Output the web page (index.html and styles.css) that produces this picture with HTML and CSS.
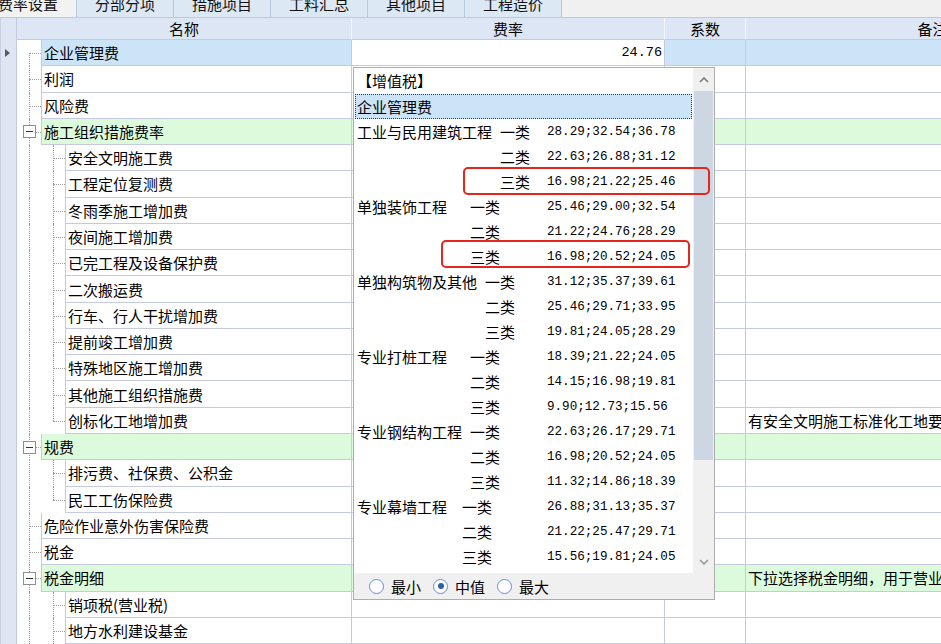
FILE: index.html
```html
<!DOCTYPE html>
<html lang="zh-CN">
<head>
<meta charset="utf-8">
<title>费率设置</title>
<link rel="stylesheet" href="styles.css">
</head>
<body>
<div class="tabs">
  <div class="tab active">费率设置</div>
  <div class="tab">分部分项</div>
  <div class="tab">措施项目</div>
  <div class="tab">工料汇总</div>
  <div class="tab">其他项目</div>
  <div class="tab">工程造价</div>
</div>

<div class="grid">
  <div class="hrow">
    <div class="gut"></div>
    <div class="hc c-name">名称</div>
    <div class="hc c-rate">费率</div>
    <div class="hc c-coef">系数</div>
    <div class="hc c-rem">备注</div>
  </div>

  <div class="row sel">
    <div class="gut"><span class="arrow"></span></div>
    <div class="c-name tree"><span class="ind vl h"></span><span class="nm">企业管理费</span></div>
    <div class="cell c-rate edit">24.76</div>
    <div class="cell c-coef"></div>
    <div class="cell c-rem"></div>
  </div>
  <div class="row">
    <div class="gut"></div>
    <div class="c-name tree"><span class="ind v h"></span><span class="nm">利润</span></div>
    <div class="cell c-rate"></div><div class="cell c-coef"></div><div class="cell c-rem"></div>
  </div>
  <div class="row">
    <div class="gut"></div>
    <div class="c-name tree"><span class="ind v h"></span><span class="nm">风险费</span></div>
    <div class="cell c-rate"></div><div class="cell c-coef"></div><div class="cell c-rem"></div>
  </div>
  <div class="row g">
    <div class="gut"></div>
    <div class="c-name tree"><span class="ind v h"><span class="box"></span></span><span class="nm">施工组织措施费率</span></div>
    <div class="cell c-rate"></div><div class="cell c-coef"></div><div class="cell c-rem"></div>
  </div>
  <div class="row">
    <div class="gut"></div>
    <div class="c-name tree"><span class="ind v"></span><span class="ind v h"></span><span class="nm">安全文明施工费</span></div>
    <div class="cell c-rate"></div><div class="cell c-coef"></div><div class="cell c-rem"></div>
  </div>
  <div class="row">
    <div class="gut"></div>
    <div class="c-name tree"><span class="ind v"></span><span class="ind v h"></span><span class="nm">工程定位复测费</span></div>
    <div class="cell c-rate"></div><div class="cell c-coef"></div><div class="cell c-rem"></div>
  </div>
  <div class="row">
    <div class="gut"></div>
    <div class="c-name tree"><span class="ind v"></span><span class="ind v h"></span><span class="nm">冬雨季施工增加费</span></div>
    <div class="cell c-rate"></div><div class="cell c-coef"></div><div class="cell c-rem"></div>
  </div>
  <div class="row">
    <div class="gut"></div>
    <div class="c-name tree"><span class="ind v"></span><span class="ind v h"></span><span class="nm">夜间施工增加费</span></div>
    <div class="cell c-rate"></div><div class="cell c-coef"></div><div class="cell c-rem"></div>
  </div>
  <div class="row">
    <div class="gut"></div>
    <div class="c-name tree"><span class="ind v"></span><span class="ind v h"></span><span class="nm">已完工程及设备保护费</span></div>
    <div class="cell c-rate"></div><div class="cell c-coef"></div><div class="cell c-rem"></div>
  </div>
  <div class="row">
    <div class="gut"></div>
    <div class="c-name tree"><span class="ind v"></span><span class="ind v h"></span><span class="nm">二次搬运费</span></div>
    <div class="cell c-rate"></div><div class="cell c-coef"></div><div class="cell c-rem"></div>
  </div>
  <div class="row">
    <div class="gut"></div>
    <div class="c-name tree"><span class="ind v"></span><span class="ind v h"></span><span class="nm">行车、行人干扰增加费</span></div>
    <div class="cell c-rate"></div><div class="cell c-coef"></div><div class="cell c-rem"></div>
  </div>
  <div class="row">
    <div class="gut"></div>
    <div class="c-name tree"><span class="ind v"></span><span class="ind v h"></span><span class="nm">提前竣工增加费</span></div>
    <div class="cell c-rate"></div><div class="cell c-coef"></div><div class="cell c-rem"></div>
  </div>
  <div class="row">
    <div class="gut"></div>
    <div class="c-name tree"><span class="ind v"></span><span class="ind v h"></span><span class="nm">特殊地区施工增加费</span></div>
    <div class="cell c-rate"></div><div class="cell c-coef"></div><div class="cell c-rem"></div>
  </div>
  <div class="row">
    <div class="gut"></div>
    <div class="c-name tree"><span class="ind v"></span><span class="ind v h"></span><span class="nm">其他施工组织措施费</span></div>
    <div class="cell c-rate"></div><div class="cell c-coef"></div><div class="cell c-rem"></div>
  </div>
  <div class="row">
    <div class="gut"></div>
    <div class="c-name tree"><span class="ind v"></span><span class="ind vu h"></span><span class="nm">创标化工地增加费</span></div>
    <div class="cell c-rate"></div><div class="cell c-coef"></div><div class="cell c-rem">有安全文明施工标准化工地要求的工程计取</div>
  </div>
  <div class="row g">
    <div class="gut"></div>
    <div class="c-name tree"><span class="ind v h"><span class="box"></span></span><span class="nm">规费</span></div>
    <div class="cell c-rate"></div><div class="cell c-coef"></div><div class="cell c-rem"></div>
  </div>
  <div class="row">
    <div class="gut"></div>
    <div class="c-name tree"><span class="ind v"></span><span class="ind v h"></span><span class="nm">排污费、社保费、公积金</span></div>
    <div class="cell c-rate"></div><div class="cell c-coef"></div><div class="cell c-rem"></div>
  </div>
  <div class="row">
    <div class="gut"></div>
    <div class="c-name tree"><span class="ind v"></span><span class="ind vu h"></span><span class="nm">民工工伤保险费</span></div>
    <div class="cell c-rate"></div><div class="cell c-coef"></div><div class="cell c-rem"></div>
  </div>
  <div class="row">
    <div class="gut"></div>
    <div class="c-name tree"><span class="ind v h"></span><span class="nm">危险作业意外伤害保险费</span></div>
    <div class="cell c-rate"></div><div class="cell c-coef"></div><div class="cell c-rem"></div>
  </div>
  <div class="row">
    <div class="gut"></div>
    <div class="c-name tree"><span class="ind v h"></span><span class="nm">税金</span></div>
    <div class="cell c-rate"></div><div class="cell c-coef"></div><div class="cell c-rem"></div>
  </div>
  <div class="row g">
    <div class="gut"></div>
    <div class="c-name tree"><span class="ind v h"><span class="box"></span></span><span class="nm">税金明细</span></div>
    <div class="cell c-rate"></div><div class="cell c-coef"></div><div class="cell c-rem">下拉选择税金明细，用于营业税计算</div>
  </div>
  <div class="row">
    <div class="gut"></div>
    <div class="c-name tree"><span class="ind v"></span><span class="ind v h"></span><span class="nm">销项税(营业税)</span></div>
    <div class="cell c-rate"></div><div class="cell c-coef"></div><div class="cell c-rem"></div>
  </div>
  <div class="row">
    <div class="gut"></div>
    <div class="c-name tree"><span class="ind v"></span><span class="ind v h"></span><span class="nm">地方水利建设基金</span></div>
    <div class="cell c-rate"></div><div class="cell c-coef"></div><div class="cell c-rem"></div>
  </div>
</div>

<div class="popup">
  <div class="pbody">
    <div class="list">
      <div class="phead">【增值税】</div>
      <div class="psel">企业管理费</div>
      <div class="opt"><span class="lead"><span class="pn w143">工业与民用建筑工程</span><span>一类</span></span><span class="num">28.29;32.54;36.78</span></div>
      <div class="opt"><span class="lead"><span class="pn w143"></span><span>二类</span></span><span class="num">22.63;26.88;31.12</span></div>
      <div class="opt"><span class="lead"><span class="pn w143"></span><span>三类</span></span><span class="num">16.98;21.22;25.46</span></div>
      <div class="opt"><span class="lead"><span class="pn w112">单独装饰工程</span><span>一类</span></span><span class="num">25.46;29.00;32.54</span></div>
      <div class="opt"><span class="lead"><span class="pn w112"></span><span>二类</span></span><span class="num">21.22;24.76;28.29</span></div>
      <div class="opt"><span class="lead"><span class="pn w112"></span><span>三类</span></span><span class="num">16.98;20.52;24.05</span></div>
      <div class="opt"><span class="lead"><span class="pn w128">单独构筑物及其他</span><span>一类</span></span><span class="num">31.12;35.37;39.61</span></div>
      <div class="opt"><span class="lead"><span class="pn w128"></span><span>二类</span></span><span class="num">25.46;29.71;33.95</span></div>
      <div class="opt"><span class="lead"><span class="pn w128"></span><span>三类</span></span><span class="num">19.81;24.05;28.29</span></div>
      <div class="opt"><span class="lead"><span class="pn w112">专业打桩工程</span><span>一类</span></span><span class="num">18.39;21.22;24.05</span></div>
      <div class="opt"><span class="lead"><span class="pn w112"></span><span>二类</span></span><span class="num">14.15;16.98;19.81</span></div>
      <div class="opt"><span class="lead"><span class="pn w112"></span><span>三类</span></span><span class="num">9.90;12.73;15.56</span></div>
      <div class="opt"><span class="lead"><span class="pn w112">专业钢结构工程</span><span>一类</span></span><span class="num">22.63;26.17;29.71</span></div>
      <div class="opt"><span class="lead"><span class="pn w112"></span><span>二类</span></span><span class="num">16.98;20.52;24.05</span></div>
      <div class="opt"><span class="lead"><span class="pn w112"></span><span>三类</span></span><span class="num">11.32;14.86;18.39</span></div>
      <div class="opt"><span class="lead"><span class="pn w105">专业幕墙工程</span><span>一类</span></span><span class="num">26.88;31.13;35.37</span></div>
      <div class="opt"><span class="lead"><span class="pn w105"></span><span>二类</span></span><span class="num">21.22;25.47;29.71</span></div>
      <div class="opt"><span class="lead"><span class="pn w105"></span><span>三类</span></span><span class="num">15.56;19.81;24.05</span></div>
    </div>
    <div class="sbar">
      <div class="sbtn"><svg width="10" height="6" viewBox="0 0 10 6"><polyline points="1,5 5,1 9,5" fill="none" stroke="#7a7a7a" stroke-width="1.6"/></svg></div>
      <div class="thumb"></div>
      <div class="track"></div>
      <div class="sbtn"><svg width="10" height="6" viewBox="0 0 10 6"><polyline points="1,1 5,5 9,1" fill="none" stroke="#9a9a9a" stroke-width="1.6"/></svg></div>
    </div>
  </div>
  <div class="pfoot">
    <label class="rad"><span class="dot"></span>最小</label>
    <label class="rad"><span class="dot on"></span>中值</label>
    <label class="rad"><span class="dot"></span>最大</label>
  </div>
</div>

<div class="mark m1"></div>
<div class="mark m2"></div>
</body>
</html>
```

FILE: styles.css
```css
* { box-sizing: border-box; }
html, body { margin: 0; padding: 0; }
body {
  width: 941px;
  height: 644px;
  overflow: hidden;
  position: relative;
  background: #ffffff;
  color: #000;
  font-family: "Noto Sans CJK SC", "Microsoft YaHei", sans-serif;
  font-size: 15px;
}

/* tabs */
.tabs {
  display: flex;
  height: 18px;
  background: #f0f0f0;
  border-bottom: 1px solid #c3c8d3;
  overflow: hidden;
}
.tab {
  flex: none;
  width: 97px;
  height: 17px;
  line-height: 7px;
  text-align: center;
  background: #dde8f5;
  border-right: 1px solid #b6c8de;
  color: #111;
}
.tab.active {
  margin-left: -20px;
  background: #f2f2f2;
}

/* grid */
.grid { display: flex; flex-direction: column; }
.hrow, .row { display: flex; flex: none; }
.hrow { height: 22px; }
.row { height: 26.27px; }
.gut {
  flex: none;
  width: 17px;
  background: #dfe6f3;
  border-left: 1px solid #cad0e2;
  border-right: 1px solid #c6cadf;
  display: flex;
  align-items: center;
  padding-left: 4px;
}
.arrow {
  width: 0; height: 0;
  border-left: 5px solid #5a5a5a;
  border-top: 4px solid transparent;
  border-bottom: 4px solid transparent;
}
.hc {
  background: #dce6f4;
  border-right: 1px solid #f3f6fb;
  border-bottom: 1px solid #c6cadf;
  text-align: center;
  line-height: 21px;
  white-space: nowrap;
  overflow: hidden;
}
.c-name { flex: none; width: 335px; }
.c-rate { flex: none; width: 313px; }
.c-coef { flex: none; width: 81px; }
.c-rem { flex: none; width: 374px; }

.cell {
  border-right: 1px solid #c6cadf;
  border-bottom: 1px solid #c6cadf;
  white-space: nowrap;
  overflow: hidden;
  display: flex;
  align-items: center;
  padding-left: 2px;
}
.tree { display: flex; }
.ind {
  flex: none;
  width: 24px;
  position: relative;
  display: flex;
  align-items: center;
}
.ind.v::before, .ind.vl::before, .ind.vu::before {
  content: "";
  position: absolute;
  left: 12px;
  top: 0;
  bottom: 0;
  border-left: 1px dotted #9c9c9c;
}
.ind.vl::before { top: 50%; }
.ind.vu::before { bottom: 50%; }
.ind.h::after {
  content: "";
  position: absolute;
  left: 12px;
  right: 0;
  top: 50%;
  border-top: 1px dotted #9c9c9c;
}
.box {
  position: relative;
  z-index: 1;
  margin-left: 6px;
  width: 13px;
  height: 13px;
  border: 1px solid #8e8e8e;
  background: #fff;
  display: flex;
  align-items: center;
  justify-content: center;
}
.box::after {
  content: "";
  width: 7px;
  height: 1px;
  background: #333;
}
.nm {
  flex: 1;
  border-left: 1px solid #c6cadf;
  border-right: 1px solid #c6cadf;
  border-bottom: 1px solid #c6cadf;
  padding-left: 2px;
  display: flex;
  align-items: center;
  white-space: nowrap;
  overflow: hidden;
}
.sel .nm, .sel .c-coef, .sel .c-rem { background: #cce4f7; }
.edit {
  justify-content: flex-end;
  padding-right: 2px;
  font-family: "Liberation Mono", monospace;
  font-size: 13.5px;
  background: #fff;
}
.g .nm, .g .cell { background: #dcfbdc; }

/* popup */
.popup {
  position: absolute;
  left: 353px;
  top: 67px;
  width: 362px;
  height: 533px;
  border: 1px solid #adadad;
  background: #fff;
  display: flex;
  flex-direction: column;
  z-index: 5;
}
.pbody { flex: none; height: 505px; display: flex; }
.list { flex: 1; padding: 0 1px; overflow: hidden; }
.phead { height: 26px; line-height: 26px; padding-left: 2px; }
.psel {
  height: 25px;
  line-height: 23px;
  padding-left: 1px;
  background: #cce4f7;
  border: 1px dotted #3a3a3a;
}
.opt {
  height: 25px;
  display: grid;
  grid-template-columns: 190px auto;
  align-items: center;
  padding-left: 2px;
  white-space: nowrap;
}
.lead { display: flex; }
.pn { flex: none; }
.w143 { width: 143px; }
.w128 { width: 128px; }
.w112 { width: 113px; }
.w105 { width: 105px; }
.num {
  font-family: "Liberation Mono", monospace;
  font-size: 12.6px;
}
.sbar {
  flex: none;
  width: 21px;
  display: flex;
  flex-direction: column;
  background: #f0f0f0;
}
.sbtn {
  flex: none;
  height: 23px;
  display: flex;
  align-items: center;
  justify-content: center;
}
.thumb { flex: none; height: 369px; background: #cdd7e3; margin: 0 1px; }
.track { flex: 1; }
.pfoot {
  flex: 1;
  background: #f0f0f0;
  display: flex;
  align-items: center;
  padding-left: 15px;
}
.rad {
  display: flex;
  align-items: center;
  gap: 7px;
  margin-right: 12px;
}
.dot {
  width: 15px;
  height: 15px;
  border-radius: 50%;
  border: 1px solid #6a8fcf;
  background: #fff;
  display: flex;
  align-items: center;
  justify-content: center;
}
.dot.on::after {
  content: "";
  width: 6px;
  height: 6px;
  border-radius: 50%;
  background: #2b5fb6;
}

/* red annotation boxes */
.mark {
  position: absolute;
  border: 2.5px solid #e5261d;
  border-radius: 5px;
  z-index: 10;
}
.m1 { left: 463px; top: 167px; width: 247px; height: 28px; }
.m2 { left: 441px; top: 240px; width: 249px; height: 28px; }
```
